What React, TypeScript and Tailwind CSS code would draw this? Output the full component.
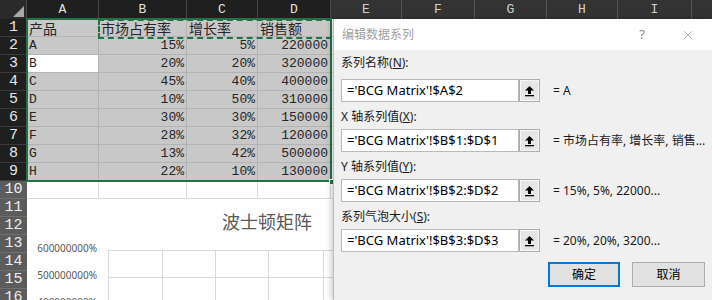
import React from 'react';
import { X } from 'lucide-react';

const cols = [
  { key: 'A', w: 'w-[72px]' },
  { key: 'B', w: 'w-[88px]' },
  { key: 'C', w: 'w-[71px]' },
  { key: 'D', w: 'w-[73px]' },
  { key: 'E', w: 'w-[71px]' },
  { key: 'F', w: 'w-[73px]' },
  { key: 'G', w: 'w-[72px]' },
  { key: 'H', w: 'w-[71px]' },
  { key: 'I', w: 'w-[74px]' },
];

const data = [
  ['产品', '市场占有率', '增长率', '销售额'],
  ['A', '15%', '5%', '220000'],
  ['B', '20%', '20%', '320000'],
  ['C', '45%', '40%', '400000'],
  ['D', '10%', '50%', '310000'],
  ['E', '30%', '30%', '150000'],
  ['F', '28%', '32%', '120000'],
  ['G', '13%', '42%', '500000'],
  ['H', '22%', '10%', '130000'],
  ['', '', '', ''],
];

const cjk = (s: string) => /[\u4e00-\u9fff]/.test(s);

const UpArrow = () => (
  <svg width="11" height="12" viewBox="0 0 11 12">
    <path d="M5.5 1 L10 5.5 L7 5.5 L7 9 L4 9 L4 5.5 L1 5.5 Z" fill="#000" />
    <rect x="1" y="10" width="9" height="1.3" fill="#000" />
  </svg>
);

const Field = ({ label, mnemonic, value, result, first }: { label: string; mnemonic: string; value: string; result: string; first?: boolean }) => (
  <div className={first ? '' : 'mt-[7px]'}>
    <div className="h-[16px] leading-[16px] text-[12px] text-[#1a1a1a]">
      {label}(<u>{mnemonic}</u>):
    </div>
    <div className={`flex items-center ${first ? 'mt-[8px]' : 'mt-[4px]'}`}>
      <div className="w-[178px] h-[23px] border border-[#b9b9b9] bg-white pl-[5px] text-[13px] leading-[21px] text-black whitespace-nowrap overflow-hidden">
        {value}
      </div>
      <div className="w-[21px] h-[23px] border border-[#adadad] bg-[#e6e6e6] flex items-center justify-center shadow-[inset_0_0_0_1px_#f7f7f7]">
        <UpArrow />
      </div>
      <div className="ml-[13px] text-[12px] text-[#1a1a1a] whitespace-nowrap">{result}</div>
    </div>
  </div>
);

export default function App() {
  return (
    <div className="relative w-[712px] h-[300px] overflow-hidden bg-white font-['Liberation_Mono','Noto_Sans_CJK_SC',monospace]">
      {/* column headers */}
      <div className="flex h-[19px]">
        <div className="w-[27px] h-full bg-[#2a2a2a] border-r border-[#4a4a4a] flex items-end justify-end p-[2px]">
          <div className="w-0 h-0 border-l-[11px] border-l-transparent border-b-[11px] border-b-[#a8a8a8]" />
        </div>
        {cols.map((c, i) => (
          <div
            key={c.key}
            className={`${c.w} h-full border-r ${i < 4 ? 'bg-[#1f1f1f] border-[#474747] text-[#e0e0e0]' : 'bg-[#333333] border-[#555555] text-[#cfcfcf]'} flex items-center justify-center text-[13px] leading-none`}
          >
            {c.key}
          </div>
        ))}
        <div className="flex-1 h-full bg-[#333333]" />
      </div>

      {/* rows 1-10 */}
      {data.map((r, ri) => (
        <div key={ri} className="flex h-[18px]">
          <div
            className={`w-[27px] h-full border-b flex items-center justify-center text-[15px] leading-none ${ri < 9 ? 'bg-[#1f1f1f] border-[#3a3a3a] text-[#e6e6e6]' : 'bg-[#5c5c5c] border-[#707070] text-[#eeeeee]'}`}
          >
            {ri + 1}
          </div>
          {cols.map((c, ci) => {
            const v = ci < 4 ? r[ci] : '';
            const sel = ri < 9 && ci < 4;
            const active = ri === 2 && ci === 0;
            const right = ri > 0 && ci > 0;
            return (
              <div
                key={c.key}
                className={`${c.w} h-full border-r border-b flex items-center px-[2px] text-[13px] leading-none text-[#262626] whitespace-nowrap overflow-hidden ${
                  active ? 'bg-white border-[#b5b5b5]' : sel ? 'bg-[#c8c8c8] border-[#b3b3b3]' : 'bg-white border-[#dadada]'
                } ${right ? 'justify-end' : 'justify-start'}`}
              >
                {cjk(v) ? <span className="text-[14px] font-['Noto_Sans_CJK_SC',sans-serif]">{v}</span> : v}
              </div>
            );
          })}
          <div className="flex-1 h-full border-b border-[#dadada]" />
        </div>
      ))}

      {/* rows 11+ with chart */}
      <div className="flex">
        <div className="w-[27px] flex flex-col">
          {[11, 12, 13, 14, 15, 16].map((n) => (
            <div key={n} className="h-[18px] bg-[#5c5c5c] border-b border-[#707070] flex items-center justify-center text-[15px] leading-none text-[#eeeeee]">
              {n}
            </div>
          ))}
        </div>
        <div className="flex-1 bg-white overflow-hidden">
          <div className="w-[480px] pt-[10px] h-[34px] text-center text-[18px] leading-[24px] text-[#595959] font-['Noto_Sans_CJK_SC',sans-serif]">
            波士顿矩阵
          </div>
          <div className="flex mt-[17px]">
            <div className="w-[81px] pr-[11px] -mt-[9px] flex flex-col items-end font-['Noto_Sans',sans-serif] text-[10px] leading-[14px] text-[#595959]">
              <div className="h-[27px]">600000000%</div>
              <div className="h-[27px]">500000000%</div>
              <div className="h-[27px]">400000000%</div>
            </div>
            <svg width="604" height="60" className="block">
              {[0, 27, 54].map((y) => (
                <line key={y} x1="0" x2="604" y1={y + 0.5} y2={y + 0.5} stroke="#d9d9d9" />
              ))}
              {[0, 54, 107, 160, 215, 269, 323, 377].map((x) => (
                <line key={x} x1={x + 0.5} x2={x + 0.5} y1="0" y2="60" stroke="#d9d9d9" />
              ))}
            </svg>
          </div>
        </div>
      </div>

      {/* selection */}
      <div className="absolute left-[26px] top-[18px] w-[306px] h-[164px] border-2 border-[#217346]" />
      <div className="absolute left-[98px] top-[19px] w-[234px] h-[20px] border-2 border-dashed border-[#217346]" />
      <div className="absolute left-[329px] top-[179px] w-[6px] h-[6px] bg-[#217346] border border-white" />

      {/* dialog */}
      <div className="absolute left-[333px] top-[19px] right-0 bottom-0 bg-[#f0f0f0] border-l border-[#bdbdbd] shadow-[-2px_0_6px_rgba(0,0,0,0.2)] font-['Noto_Sans','Noto_Sans_CJK_SC',sans-serif]">
        <div className="flex items-center h-[31px] bg-white pl-[8px]">
          <span className="text-[12px] text-[#a0a0a0]">编辑数据系列</span>
          <span className="ml-auto text-[13px] text-[#8c8c8c]">?</span>
          <X size={14} strokeWidth={1} className="ml-[36px] mr-[17px] text-[#7a7a7a]" />
        </div>
        <div className="pl-[7px] pt-[5px]">
          <Field first label="系列名称" mnemonic="N" value="='BCG Matrix'!$A$2" result="= A" />
          <Field label="X 轴系列值" mnemonic="X" value="='BCG Matrix'!$B$1:$D$1" result="= 市场占有率, 增长率, 销售..." />
          <Field label="Y 轴系列值" mnemonic="Y" value="='BCG Matrix'!$B$2:$D$2" result="= 15%, 5%, 22000..." />
          <Field label="系列气泡大小" mnemonic="S" value="='BCG Matrix'!$B$3:$D$3" result="= 20%, 20%, 3200..." />
          <div className="flex justify-end gap-[12px] mt-[10px] pr-[7px]">
            <button className="w-[72px] h-[25px] bg-[#e1e1e1] border border-[#0078d7] shadow-[inset_0_0_0_1px_#0078d7] text-[12px] text-black">
              确定
            </button>
            <button className="w-[73px] h-[25px] bg-[#e1e1e1] border border-[#adadad] text-[12px] text-black">
              取消
            </button>
          </div>
        </div>
      </div>
    </div>
  );
}
